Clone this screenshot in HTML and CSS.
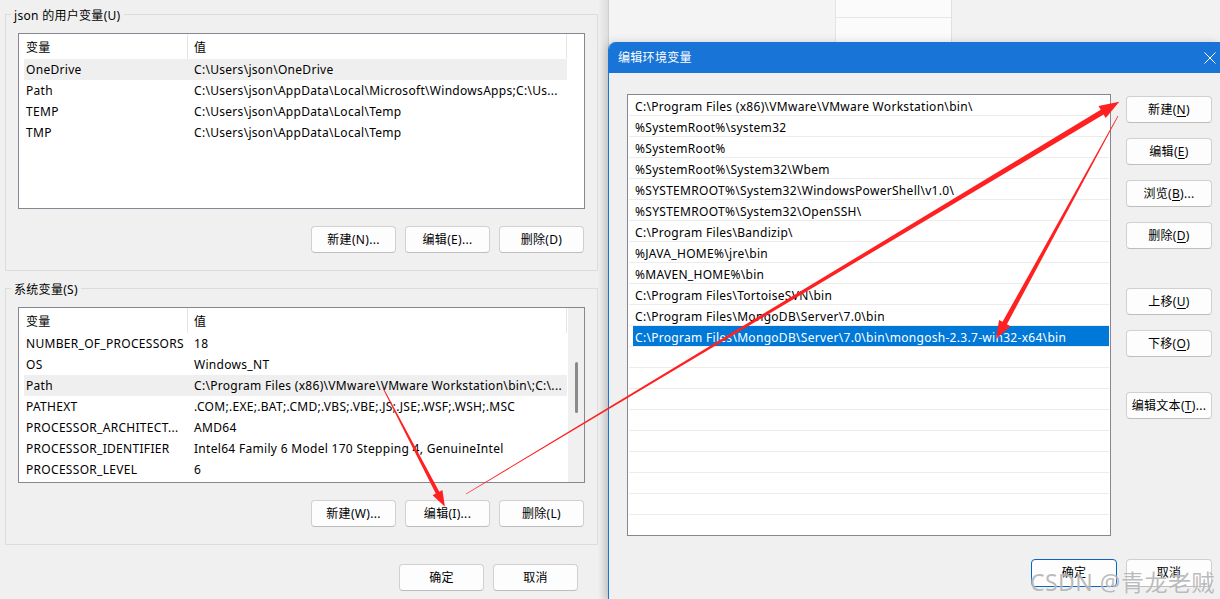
FILE: index.html
```html
<!DOCTYPE html>
<html lang="zh-CN">
<head>
<meta charset="utf-8">
<title>环境变量</title>
<link rel="stylesheet" href="styles.css">
</head>
<body>
<div class="screen">
  <div class="syswin">
    <fieldset class="grp">
      <legend>json 的用户变量(U)</legend>
      <div class="lv">
        <div class="lv-main">
          <div class="lv-head"><div class="c1">变量</div><div class="c2">值</div></div>
          <div class="lv-row hl"><div class="c1">OneDrive</div><div class="c2">C:\Users\json\OneDrive</div></div>
          <div class="lv-row"><div class="c1">Path</div><div class="c2">C:\Users\json\AppData\Local\Microsoft\WindowsApps;C:\Us...</div></div>
          <div class="lv-row"><div class="c1">TEMP</div><div class="c2">C:\Users\json\AppData\Local\Temp</div></div>
          <div class="lv-row"><div class="c1">TMP</div><div class="c2">C:\Users\json\AppData\Local\Temp</div></div>
        </div>
      </div>
      <div class="btnrow">
        <button class="btn">新建(N)...</button>
        <button class="btn">编辑(E)...</button>
        <button class="btn">删除(D)</button>
      </div>
    </fieldset>
    <fieldset class="grp">
      <legend>系统变量(S)</legend>
      <div class="lv">
        <div class="lv-main">
          <div class="lv-head"><div class="c1">变量</div><div class="c2">值</div></div>
          <div class="lv-row"><div class="c1">NUMBER_OF_PROCESSORS</div><div class="c2">18</div></div>
          <div class="lv-row"><div class="c1">OS</div><div class="c2">Windows_NT</div></div>
          <div class="lv-row hl"><div class="c1">Path</div><div class="c2">C:\Program Files (x86)\VMware\VMware Workstation\bin\;C:\...</div></div>
          <div class="lv-row"><div class="c1">PATHEXT</div><div class="c2">.COM;.EXE;.BAT;.CMD;.VBS;.VBE;.JS;.JSE;.WSF;.WSH;.MSC</div></div>
          <div class="lv-row"><div class="c1">PROCESSOR_ARCHITECT...</div><div class="c2">AMD64</div></div>
          <div class="lv-row"><div class="c1">PROCESSOR_IDENTIFIER</div><div class="c2">Intel64 Family 6 Model 170 Stepping 4, GenuineIntel</div></div>
          <div class="lv-row"><div class="c1">PROCESSOR_LEVEL</div><div class="c2">6</div></div>
        </div>
        <div class="lv-scroll"><div class="thumb"></div></div>
      </div>
      <div class="btnrow">
        <button class="btn">新建(W)...</button>
        <button class="btn">编辑(I)...</button>
        <button class="btn">删除(L)</button>
      </div>
    </fieldset>
    <div class="foot">
      <button class="btn">确定</button>
      <button class="btn">取消</button>
    </div>
  </div>

  <div class="desk">
    <div class="pane p1"></div>
    <div class="pane p2"><div class="cell"></div></div>
    <div class="pane p3"></div>
  </div>

  <div class="dlg">
    <div class="dlg-title">
      <span>编辑环境变量</span>
      <svg class="close" width="12" height="12" viewBox="0 0 12 12"><path d="M0.5 0.5L11.5 11.5M11.5 0.5L0.5 11.5" stroke="#fff" stroke-width="1" fill="none"/></svg>
    </div>
    <div class="dlg-body">
      <div class="lb">
        <div class="li"><span>C:\Program Files (x86)\VMware\VMware Workstation\bin\</span></div>
        <div class="li"><span>%SystemRoot%\system32</span></div>
        <div class="li"><span>%SystemRoot%</span></div>
        <div class="li"><span>%SystemRoot%\System32\Wbem</span></div>
        <div class="li"><span>%SYSTEMROOT%\System32\WindowsPowerShell\v1.0\</span></div>
        <div class="li"><span>%SYSTEMROOT%\System32\OpenSSH\</span></div>
        <div class="li"><span>C:\Program Files\Bandizip\</span></div>
        <div class="li"><span>%JAVA_HOME%\jre\bin</span></div>
        <div class="li"><span>%MAVEN_HOME%\bin</span></div>
        <div class="li"><span>C:\Program Files\TortoiseSVN\bin</span></div>
        <div class="li"><span>C:\Program Files\MongoDB\Server\7.0\bin</span></div>
        <div class="li sel"><span>C:\Program Files\MongoDB\Server\7.0\bin\mongosh-2.3.7-win32-x64\bin</span></div>
        <div class="li"><span></span></div>
        <div class="li"><span></span></div>
        <div class="li"><span></span></div>
        <div class="li"><span></span></div>
        <div class="li"><span></span></div>
        <div class="li"><span></span></div>
        <div class="li"><span></span></div>
        <div class="li"><span></span></div>
        <div class="li"><span></span></div>
      </div>
      <div class="dbtns">
        <button class="btn">新建(<u>N</u>)</button>
        <button class="btn">编辑(<u>E</u>)</button>
        <button class="btn">浏览(<u>B</u>)...</button>
        <button class="btn">删除(<u>D</u>)</button>
        <button class="btn sp1">上移(<u>U</u>)</button>
        <button class="btn">下移(<u>O</u>)</button>
        <button class="btn sp2">编辑文本(<u>T</u>)...</button>
      </div>
    </div>
    <div class="dfoot">
      <button class="btn def">确定</button>
      <button class="btn">取消</button>
    </div>
  </div>

  <svg class="arrows" width="1220" height="599" viewBox="0 0 1220 599">
    <polygon transform="translate(383 388) rotate(62.48)" points="0,-0.4 118,-2 118,-5.5 134,0 118,5.5 118,2 0,0.4"/>
    <polygon transform="translate(466 494) rotate(-30.98)" points="0,-0.3 742,-2.8 742,-7 762,0 742,7 742,2.8 0,0.3"/>
    <polygon transform="translate(1118 116) rotate(118.68)" points="0,-0.3 236,-2.5 236,-6.5 254,0 236,6.5 236,2.5 0,0.3"/>
  </svg>

  <div class="wm">CSDN @青龙老贼</div>
</div>
</body>
</html>
```
FILE: styles.css
```css
* { box-sizing: border-box; }
html, body { margin: 0; padding: 0; }
body {
  width: 1220px;
  height: 599px;
  overflow: hidden;
  background: #f3f3f3;
  font-family: "Noto Sans", "Noto Sans CJK SC", sans-serif;
  font-size: 12px;
  letter-spacing: 0.3px;
  color: #000;
}
.screen {
  position: relative;
  display: flex;
  width: 1220px;
  height: 599px;
  overflow: hidden;
}

/* ---------- left window ---------- */
.syswin {
  flex: none;
  width: 609px;
  height: 599px;
  padding-left: 5px;
  background: linear-gradient(to right, #f0f0f0 598px, #e8e8e8 602px, #dedede 608px, #cfcfcf 608px);
}
.grp {
  margin: 5px 0 0;
  padding: 0 0 17px;
  width: 593px;
  min-width: 0;
  border: 1px solid #dcdcdc;
}
.grp + .grp { margin-top: 8px; }
.grp legend {
  margin-left: 5px;
  padding: 3px 3px 0;
  line-height: 16px;
  font-size: 12px;
}
.lv {
  display: flex;
  margin: 9px 0 0 12px;
  width: 567px;
  height: 176px;
  border: 1px solid #878791;
  background: #fff;
}
.lv-main { width: 548px; flex: none; }
.lv-head {
  display: flex;
  height: 25px;
  line-height: 27px;
  border-right: 1px solid #e5e5e5;
  overflow: hidden;
}
.lv-head .c1 {
  width: 169px;
  padding-left: 7px;
  border-right: 1px solid #e5e5e5;
}
.lv-head .c2 { flex: 1; padding-left: 6px; }
.lv-row {
  display: flex;
  height: 21px;
  line-height: 22px;
  margin-left: 5px;
  white-space: nowrap;
  overflow: hidden;
}
.lv-row .c1 { width: 163px; flex: none; padding-left: 2px; overflow: hidden; }
.lv-row .c2 { flex: 1; padding-left: 7px; overflow: hidden; }
.lv-row.hl { background: #efefef; }
.lv-scroll {
  flex: 1;
  display: flex;
  flex-direction: column;
  align-items: center;
  background: #f0f0f0;
  border-left: 1px solid #fff;
}
.thumb {
  width: 3px;
  height: 51px;
  margin-top: 54px;
  background: #8a8a8a;
  border-radius: 2px;
}
.btnrow {
  display: flex;
  justify-content: flex-end;
  gap: 9px;
  margin-top: 17px;
  padding-right: 13px;
}
.btn {
  appearance: none;
  -webkit-appearance: none;
  width: 85px;
  height: 27px;
  margin: 0;
  padding: 0;
  font: inherit;
  font-size: 12px;
  line-height: 25px;
  letter-spacing: 0.3px;
  color: #000;
  text-align: center;
  white-space: nowrap;
  background: #fdfdfd;
  border: 1px solid #d0d0d0;
  border-bottom-color: #bdbdbd;
  border-radius: 4px;
}
.btn u { text-decoration: underline; text-underline-offset: 2px; }
.foot {
  display: flex;
  justify-content: flex-end;
  gap: 9px;
  width: 592px;
  padding-right: 19px;
  margin-top: 19px;
}

/* ---------- desktop strip ---------- */
.desk { flex: 1; display: flex; align-items: flex-start; }
.pane { height: 42px; }
.p1 { width: 226px; background: #f4f4f4; }
.p2 {
  width: 117px;
  background: #fbfbfb;
  border-left: 1px solid #e4e4e4;
  border-right: 1px solid #e0e0e0;
}
.p2 .cell { height: 18px; border-bottom: 1px solid #e6e6e6; }
.p3 { flex: 1; background: #f2f2f2; }

/* ---------- edit dialog ---------- */
.dlg {
  position: absolute;
  left: 608px;
  top: 42px;
  width: 612px;
  height: 557px;
  background: #f0f0f0;
  border-left: 1px solid #1a73d6;
  border-top-left-radius: 8px;
  overflow: hidden;
  box-shadow: -2px 0 8px rgba(0, 0, 0, 0.15);
}
.dlg-title {
  display: flex;
  align-items: center;
  justify-content: space-between;
  height: 31px;
  padding: 0 4px 2px 9px;
  background: #1874d7;
  color: #fff;
  font-size: 12px;
}
.close { display: block; margin-top: 2px; }
.dlg-body {
  display: flex;
  padding: 21px 8px 0 18px;
}
.lb {
  flex: none;
  width: 484px;
  height: 442px;
  border: 1px solid #878791;
  background: #fff;
  padding: 0 1px;
  overflow: hidden;
}
.li {
  height: 21px;
  padding-left: 4px;
  border-bottom: 1px solid #ececec;
  white-space: nowrap;
}
.li span {
  display: block;
  height: 20px;
  line-height: 23px;
  padding-left: 2px;
  overflow: hidden;
}
.li.sel span { background: #0078d7; color: #fff; }
.dbtns {
  display: flex;
  flex-direction: column;
  gap: 15px;
  margin-left: 15px;
  padding-top: 2px;
}
.dbtns .btn { width: 86px; }
.dbtns .sp1 { margin-top: 24px; }
.dbtns .sp2 { margin-top: 20px; }
.dfoot {
  display: flex;
  justify-content: flex-end;
  gap: 9px;
  padding-right: 8px;
  margin-top: 23px;
}
.dfoot .btn { width: 86px; height: 28px; line-height: 26px; }
.btn.def { border-color: #0a64c4; }

/* ---------- overlays ---------- */
.arrows {
  position: absolute;
  left: 0;
  top: 0;
  pointer-events: none;
  fill: #ff2121;
}
.wm {
  position: absolute;
  right: 5px;
  bottom: 2px;
  font-size: 23px;
  line-height: 30px;
  letter-spacing: 0.5px;
  color: rgba(120, 120, 120, 0.5);
  text-shadow: 0 0 1px rgba(255, 255, 255, 0.9);
  pointer-events: none;
}
```
